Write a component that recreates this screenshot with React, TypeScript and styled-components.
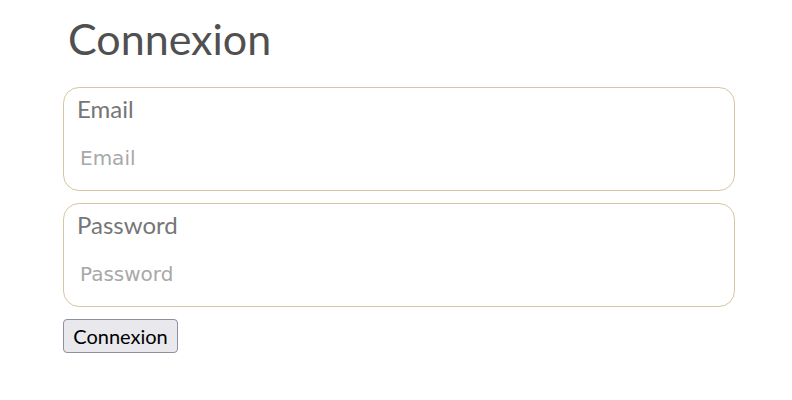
import React from "react";
import styled, { createGlobalStyle } from "styled-components";

const Global = createGlobalStyle`
  html, body { margin: 0; padding: 0; background: #fff; }
  body { font-family: "Lato", "Open Sans", sans-serif; }
`;

const Page = styled.div`
  padding: 14px 57px 0 63px;
  display: flex;
  flex-direction: column;
`;

const Title = styled.h1`
  margin: 0 0 23px 5px;
  font-family: "Lato", sans-serif;
  font-weight: 400;
  font-size: 43px;
  line-height: 50px;
  color: #505050;
`;

const Form = styled.form`
  display: flex;
  flex-direction: column;
  gap: 12px;
  align-items: flex-start;
`;

const Field = styled.label`
  box-sizing: border-box;
  width: 672px;
  height: 104px;
  border: 1px solid #d6c7a4;
  border-radius: 16px;
  padding: 6px 13px 0 13px;
  display: flex;
  flex-direction: column;
`;

const LabelText = styled.span`
  font-family: "Lato", sans-serif;
  font-weight: 400;
  font-size: 24px;
  line-height: 30px;
  color: #767676;
`;

const Input = styled.input`
  margin-top: 21px;
  border: none;
  outline: none;
  padding: 0 3px;
  font-family: "DejaVu Sans", "Verdana", sans-serif;
  font-size: 20px;
  line-height: 26px;
  color: #333;
  background: transparent;
  &::placeholder { color: #a8a8a8; }
`;

const Button = styled.button`
  height: 34px;
  width: 115px;
  border: 1px solid #8f8f9d;
  border-radius: 4px;
  background: #e9e9ed;
  font-family: "Lato", sans-serif;
  font-size: 20px;
  color: #000;
  padding: 0;
`;

export default function App() {
  return (
    <>
      <Global />
      <Page>
        <Title>Connexion</Title>
        <Form onSubmit={(e) => e.preventDefault()}>
          <Field>
            <LabelText>Email</LabelText>
            <Input type="email" placeholder="Email" />
          </Field>
          <Field>
            <LabelText>Password</LabelText>
            <Input type="password" placeholder="Password" />
          </Field>
          <Button type="submit">Connexion</Button>
        </Form>
      </Page>
    </>
  );
}
